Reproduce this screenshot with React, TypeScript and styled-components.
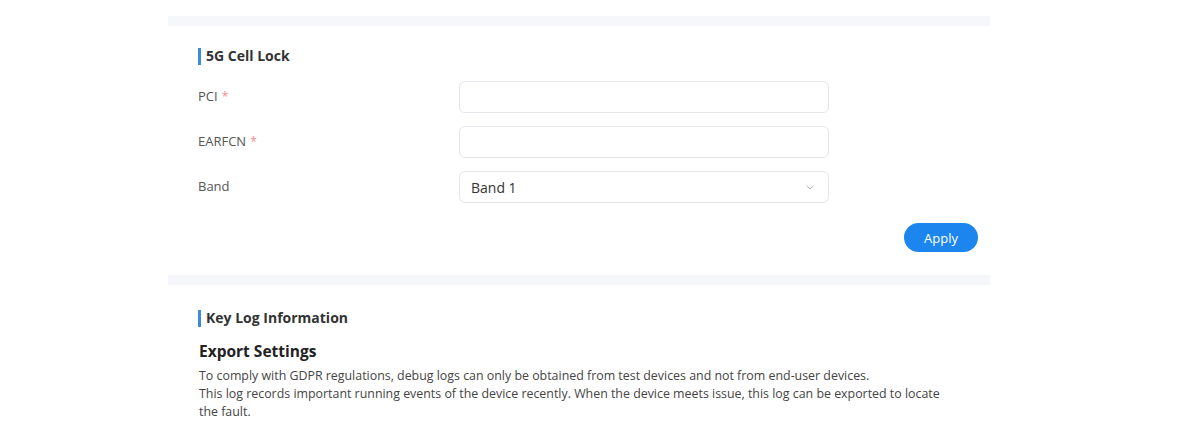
import React from "react";
import styled, { createGlobalStyle } from "styled-components";

const GlobalStyle = createGlobalStyle`
  html, body {
    margin: 0;
    padding: 0;
    background: #ffffff;
    font-family: "Open Sans", "Noto Sans", Arial, sans-serif;
  }
`;

const Page = styled.main`
  width: 822px;
  margin: 0 0 0 168px;
  background: #f5f7fa;
  display: flex;
  flex-direction: column;
  gap: 10px;
  height: 444px;
  overflow: hidden;
`;

const Card = styled.section<{ $pad?: string; $h?: number; $grow?: boolean }>`
  background: #ffffff;
  box-sizing: border-box;
  padding: ${(p) => p.$pad || "0"};
  flex: ${(p) => (p.$grow ? "1" : "none")};
  ${(p) => (p.$h !== undefined ? `height: ${p.$h}px;` : "")}
`;

const Title = styled.h2`
  margin: 0;
  display: flex;
  align-items: center;
  gap: 5px;
  font-size: 14px;
  font-weight: 700;
  color: #333333;
  line-height: 20px;
  &::before {
    content: "";
    width: 3px;
    height: 17px;
    background: #3a8ed6;
  }
`;

const Form = styled.div`
  margin-top: 15px;
  display: flex;
  flex-direction: column;
  gap: 13px;
`;

const Row = styled.div`
  display: flex;
  align-items: center;
`;

const Label = styled.label`
  width: 261px;
  font-size: 13px;
  color: #555555;
  margin-top: -3px;
`;

const Star = styled.span`
  color: #f28a8a;
  margin-left: 4px;
  font-size: 12px;
`;

const Field = styled.div`
  width: 370px;
  height: 32px;
  box-sizing: border-box;
  border: 1px solid #e4e7eb;
  border-radius: 6px;
  background: #fff;
  display: flex;
  align-items: center;
  justify-content: space-between;
  padding: 0 12px 0 11px;
  font-size: 14px;
  color: #333;
`;

const Chevron = styled.svg`
  width: 12px;
  height: 12px;
`;

const Actions = styled.div`
  display: flex;
  justify-content: flex-end;
  margin-top: 20px;
`;

const ApplyButton = styled.button`
  width: 74px;
  height: 29px;
  border: none;
  border-radius: 15px;
  background: #1c86ee;
  color: #fff;
  font-family: inherit;
  font-size: 13px;
  cursor: pointer;
`;

const SubTitle = styled.h3`
  margin: 12px 0 5px 1px;
  font-size: 15.5px;
  font-weight: 700;
  color: #222;
`;

const Text = styled.p`
  margin: 0 0 0 1px;
  width: 745px;
  font-size: 12.4px;
  line-height: 18px;
  color: #444;
`;

const fields = [
  { label: "PCI", required: true, value: "" },
  { label: "EARFCN", required: true, value: "" },
  { label: "Band", required: false, value: "Band 1", select: true },
];

export default function App() {
  return (
    <>
      <GlobalStyle />
      <Page>
        <Card $h={16} />
        <Card $pad="20px 12px 23px 30px" $h={249}>
          <Title>5G Cell Lock</Title>
          <Form>
            {fields.map((f) => (
              <Row key={f.label}>
                <Label>
                  {f.label}
                  {f.required && <Star>*</Star>}
                </Label>
                <Field>
                  <span>{f.value}</span>
                  {f.select && (
                    <Chevron viewBox="0 0 12 12">
                      <path d="M2.5 4.5 L6 8 L9.5 4.5" fill="none" stroke="#b5b9bf" strokeWidth="1" />
                    </Chevron>
                  )}
                </Field>
              </Row>
            ))}
          </Form>
          <Actions>
            <ApplyButton>Apply</ApplyButton>
          </Actions>
        </Card>
        <Card $pad="23px 30px 20px 30px" $grow>
          <Title>Key Log Information</Title>
          <SubTitle>Export Settings</SubTitle>
          <Text>
            To comply with GDPR regulations, debug logs can only be obtained from test devices and not from end-user devices.
            <br />
            This log records important running events of the device recently. When the device meets issue, this log can be exported to locate the fault.
          </Text>
        </Card>
      </Page>
    </>
  );
}
